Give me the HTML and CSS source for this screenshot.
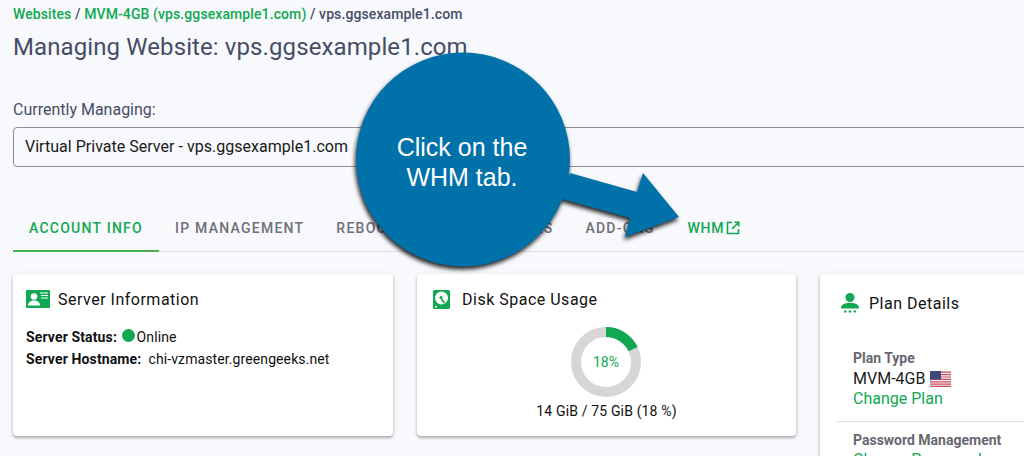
FILE: index.html
```html
<!DOCTYPE html>
<html>
  <head>
    <meta charset="utf-8">
    <title>Managing Website</title>
    <link rel="stylesheet" href="styles.css">
  </head>
  <body>
    <div class="page">
      <div class="crumbs">
        <a href="#">Websites</a> / <a href="#">MVM-4GB (vps.ggsexample1.com)</a> / vps.ggsexample1.com
      </div>
      <h1>Managing Website: vps.ggsexample1.com</h1>
      <label class="managing">Currently Managing:</label>
      <div class="picker">Virtual Private Server - vps.ggsexample1.com</div>

      <div class="tabs">
        <a class="tab active">Account Info</a>
        <a class="tab">IP Management</a>
        <a class="tab">Reboot</a>
        <a class="tab">VPS Templates</a>
        <a class="tab">Add-Ons</a>
        <a class="tab whm">WHM
          <svg class="ext" viewBox="0 0 14 14" width="14" height="14">
            <path d="M6 1.5H1.5v11h11V8M8.5 1.2h4.3v4.3M12.5 1.5L6 8" fill="none" stroke="#10a852" stroke-width="1.6"/>
          </svg>
        </a>
      </div>

      <div class="cards">
        <div class="card">
          <div class="card-title">
            <svg class="icon" viewBox="0 0 24 18" width="24" height="18">
              <rect width="24" height="18" rx="1" fill="#10a852"/>
              <circle cx="8" cy="6.5" r="3.3" fill="#fff"/>
              <path d="M2 15.5c0-3.5 3-5 6-5s6 1.500 6 5z" fill="#fff"/>
              <path d="M14 3h8M15 5.500h7M15 8h7" stroke="#fff" stroke-width="1"/>
            </svg>
            Server Information
          </div>
          <div class="info"><b>Server Status:</b> <span class="dot"></span>Online</div>
          <div class="info"><b>Server Hostname:</b>&nbsp; chi-vzmaster.greengeeks.net</div>
        </div>

        <div class="card">
          <div class="card-title disk">
            <svg class="icon" viewBox="0 0 17 19" width="17" height="19">
              <rect width="17" height="19" rx="1.500" fill="#10a852"/>
              <circle cx="8.500" cy="8" r="6.500" fill="#fff"/>
              <circle cx="8" cy="7.500" r="1.500" fill="#10a852"/>
              <path d="M8.500 9l3 4" stroke="#10a852" stroke-width="1.800"/>
              <circle cx="3" cy="16.800" r="1" fill="#fff"/>
            </svg>
            Disk Space Usage
          </div>
          <div class="donut">
            <svg viewBox="0 0 70 70" width="70" height="70">
              <circle cx="35" cy="35" r="30" fill="none" stroke="#d6d6d6" stroke-width="10"/>
              <circle class="used" cx="35" cy="35" r="30" fill="none" stroke="#10a852" stroke-width="10" pathLength="100" stroke-dasharray="18 82" transform="rotate(-90 35 35)"/>
            </svg>
            <span class="pct">18%</span>
          </div>
          <div class="usage">14 GiB / 75 GiB (18 %)</div>
        </div>

        <div class="card plan">
          <div class="card-title">
            <svg class="icon" viewBox="0 0 18 20" width="18" height="20">
              <circle cx="9" cy="4.500" r="4.500" fill="#10a852"/>
              <path d="M0 15.500c0-4 3-5.500 9-5.500s9 1.500 9 5.500z" fill="#10a852"/>
              <path d="M3 17.500h2.500v2H3zM7.700 17.500h2.500v2H7.700zM12.500 17.500H15v2h-2.500z" fill="#10a852"/>
            </svg>
            Plan Details
          </div>
          <div class="plan-row">
            <div class="plan-label">Plan Type</div>
            <div class="plan-value">MVM-4GB
              <svg class="flag" viewBox="0 0 21 16" width="21" height="16">
                <rect width="21" height="16" fill="#f4f0f2"/>
                <path d="M0 1.200h21M0 3.600h21M0 6h21M0 8.400h21M0 10.800h21M0 13.200h21M0 15.400h21" stroke="#c9505f" stroke-width="1.200"/>
                <rect width="11" height="8.500" fill="#3b4a78"/>
              </svg>
            </div>
            <a class="plan-link" href="#">Change Plan</a>
          </div>
          <div class="plan-row">
            <div class="plan-label">Password Management</div>
            <a class="plan-link" href="#">Change Password</a>
          </div>
        </div>
      </div>
    </div>

    <div class="callout">
      <svg class="callout-shape" viewBox="0 0 340 230" width="340" height="230">
        <path d="M214 121L281 140L287 121L323 165L269 185L274 166L206 147Z" fill="#0071a9"/>
        <circle cx="107" cy="107.500" r="107" fill="#0071a9"/>
      </svg>
      <div class="callout-text">Click on the<br>WHM tab.</div>
    </div>
  </body>
</html>
```

FILE: styles.css
```css
html, body {
  margin: 0;
  height: 456px;
  overflow: hidden;
}

body {
  position: relative;
  background: #f8f9fd;
  font-family: Roboto, "Liberation Sans", sans-serif;
  color: #1a1a1a;
}

a {
  color: #10a852;
  text-decoration: none;
}

.page {
  width: 1210px;
  padding: 6px 0 0 13px;
}

.crumbs {
  font-size: 14px;
  line-height: 16px;
  font-weight: 500;
  letter-spacing: 0.1px;
  color: #454d66;
}

h1 {
  margin: 9px 0 0;
  font-size: 24px;
  line-height: 32px;
  font-weight: 400;
  letter-spacing: 0.1px;
  color: #454d66;
}

.managing {
  display: block;
  margin-top: 35px;
  font-size: 16px;
  line-height: 24px;
  color: #454d66;
}

.picker {
  box-sizing: border-box;
  height: 40px;
  margin-top: 5px;
  padding: 0 11px;
  border: 1px solid #8d8d93;
  border-radius: 4px;
  font-size: 16px;
  line-height: 38px;
  letter-spacing: 0.02px;
}

.tabs {
  display: flex;
  height: 47px;
  margin-top: 37px;
  border-bottom: 1px solid #dcdde2;
}

.tab {
  display: flex;
  align-items: center;
  gap: 2px;
  padding: 0 16px;
  font-size: 14px;
  font-weight: 500;
  letter-spacing: 1.25px;
  text-transform: uppercase;
  color: #6f6f78;
}

.tab.active {
  color: #10a852;
  border-bottom: 2px solid #4caf50;
  margin-bottom: -1px;
  padding-top: 1px;
}

.tab.whm {
  color: #10a852;
  letter-spacing: 0.75px;
  padding-left: 17px;
}

.cards {
  display: grid;
  grid-template-columns: 380px 379px 380px;
  gap: 24px;
  margin-top: 22px;
}

.card {
  box-sizing: border-box;
  height: 162px;
  padding: 15px 13px;
  background: #fff;
  border-radius: 4px;
  box-shadow: 0 2px 3px rgba(0, 0, 0, .3), 0 0 6px rgba(0, 0, 0, .06);
}

.card-title {
  display: flex;
  align-items: center;
  gap: 8px;
  height: 20px;
  font-size: 16px;
  letter-spacing: 0.5px;
  color: #111;
}

.card-title.disk {
  gap: 12px;
  padding-left: 3px;
}

.info {
  font-size: 14px;
  line-height: 22px;
  letter-spacing: 0.1px;
  color: #111;
}

.card-title + .info {
  margin-top: 17px;
}

.info b {
  font-weight: 700;
  letter-spacing: 0.13px;
}

.dot {
  display: inline-block;
  width: 13px;
  height: 13px;
  margin: 0 2px 0 1px;
  border-radius: 50%;
  background: #10a852;
}

.donut {
  position: relative;
  width: 70px;
  height: 70px;
  margin: 18px 0 0 141px;
}

.donut svg {
  display: block;
}

.pct {
  position: absolute;
  inset: 0;
  display: flex;
  align-items: center;
  justify-content: center;
  font-size: 14px;
  color: #10a852;
}

.usage {
  margin-top: 4px;
  text-align: center;
  font-size: 14px;
  line-height: 20px;
  letter-spacing: 0.15px;
  color: #111;
}

.plan {
  height: 220px;
  padding: 19px 17px;
}

.plan .card-title {
  gap: 10px;
  padding-left: 4px;
}

.plan-row {
  padding: 35px 16px 12px;
  border-bottom: 1px solid #dfdfe2;
}

.plan-row + .plan-row {
  padding-top: 8px;
  border-bottom: 0;
}

.plan-label {
  font-size: 14px;
  line-height: 20px;
  font-weight: 700;
  color: #666770;
}

.plan-value {
  display: flex;
  align-items: center;
  gap: 5px;
  margin-top: 1px;
  font-size: 16px;
  line-height: 20px;
  color: #1a1a1a;
}

.plan-link {
  display: block;
  font-size: 16px;
  line-height: 20px;
}

/* annotation drawn over the screenshot */
.callout {
  position: absolute;
  left: 356px;
  top: 52px;
  width: 340px;
  height: 230px;
}

.callout-shape {
  display: block;
  filter: drop-shadow(-1px 3px 2px rgba(0, 0, 0, .85));
}

.callout-text {
  position: absolute;
  left: 0;
  top: 80px;
  width: 212px;
  text-align: center;
  font-family: "Liberation Sans", Arial, sans-serif;
  font-size: 25px;
  line-height: 30px;
  color: #fff;
}
```
